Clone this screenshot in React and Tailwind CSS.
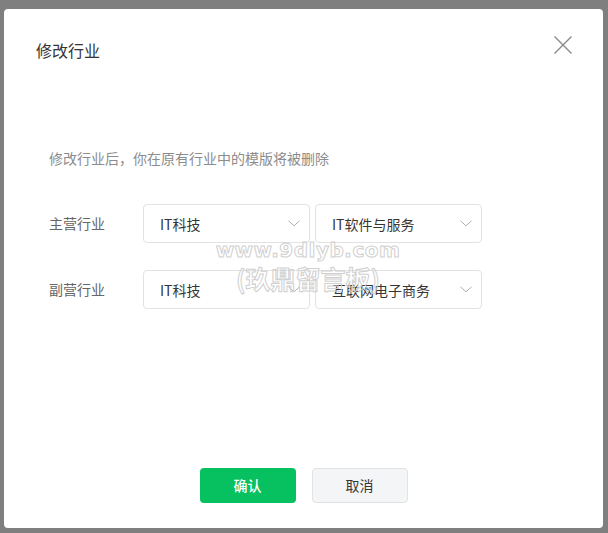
import React from 'react';

const font = { fontFamily: '"Noto Sans CJK SC", "Noto Sans", sans-serif' };

function Chevron() {
  return (
    <svg width="12" height="7" viewBox="0 0 12 7" fill="none" className="shrink-0">
      <path d="M0.5 0.8 L6 5.8 L11.5 0.8" stroke="#b0b0b0" strokeWidth="1" />
    </svg>
  );
}

function Select({ value }) {
  return (
    <div className="w-[167px] h-[39px] border border-[#e2e2e2] rounded-[4px] flex items-center justify-between pl-[16px] pr-[9px] bg-white">
      <span className="text-[14px] text-[#353535] leading-none">{value}</span>
      <Chevron />
    </div>
  );
}

function Row({ label, first, second }) {
  return (
    <div className="flex items-center h-[39px]">
      <span className="w-[94px] text-[14px] text-[#666]">{label}</span>
      <div className="flex gap-[5px]">
        <Select value={first} />
        <Select value={second} />
      </div>
    </div>
  );
}

export default function App() {
  return (
    <div className="h-[533px] w-[608px] bg-[#7f7f7f] pt-[9px] pl-[4px] overflow-hidden" style={font}>
      <div className="relative w-[599px] h-[519px] bg-white rounded-[4px] flex flex-col">
        <div className="pt-[29px] px-[32px]">
          <h2 className="text-[16px] leading-[24px] text-[#353535]">修改行业</h2>
        </div>
        <button className="absolute right-[31px] top-[27px] w-[18px] h-[18px]">
          <svg width="18" height="18" viewBox="0 0 18 18">
            <path d="M0.5 0.5 L17.5 17.5 M17.5 0.5 L0.5 17.5" stroke="#8a8a8a" strokeWidth="1.4" />
          </svg>
        </button>

        <div className="pl-[45px]">
          <p className="mt-[86px] text-[14px] leading-[20px] text-[#8c8c8c]">修改行业后，你在原有行业中的模版将被删除</p>
          <div className="mt-[36px] flex flex-col gap-[27px]">
            <Row label="主营行业" first="IT科技" second="IT软件与服务" />
            <Row label="副营行业" first="IT科技" second="互联网电子商务" />
          </div>
        </div>

        <div className="mt-auto pb-[25px] flex justify-center gap-[16px]">
          <button className="w-[96px] h-[35px] rounded-[4px] bg-[#07c160] text-white text-[14px] font-medium">确认</button>
          <button className="w-[96px] h-[35px] rounded-[4px] bg-[#f4f5f7] border border-[#e1e2e4] text-[#353535] text-[14px]">取消</button>
        </div>

        <div className="absolute left-[204px] top-[230px] w-[200px] text-center pointer-events-none select-none text-transparent [-webkit-text-stroke:1px_#d0d0d0] font-bold">
          <div className="text-[20px] leading-[22px] tracking-[0.5px]" style={{ fontFamily: '"DejaVu Sans", sans-serif' }}>www.9dlyb.com</div>
          <div className="text-[25px] leading-[30px] mt-[2px]" style={{ fontFamily: '"Noto Sans CJK SC", sans-serif' }}>(玖鼎留言板)</div>
        </div>
      </div>
    </div>
  );
}
